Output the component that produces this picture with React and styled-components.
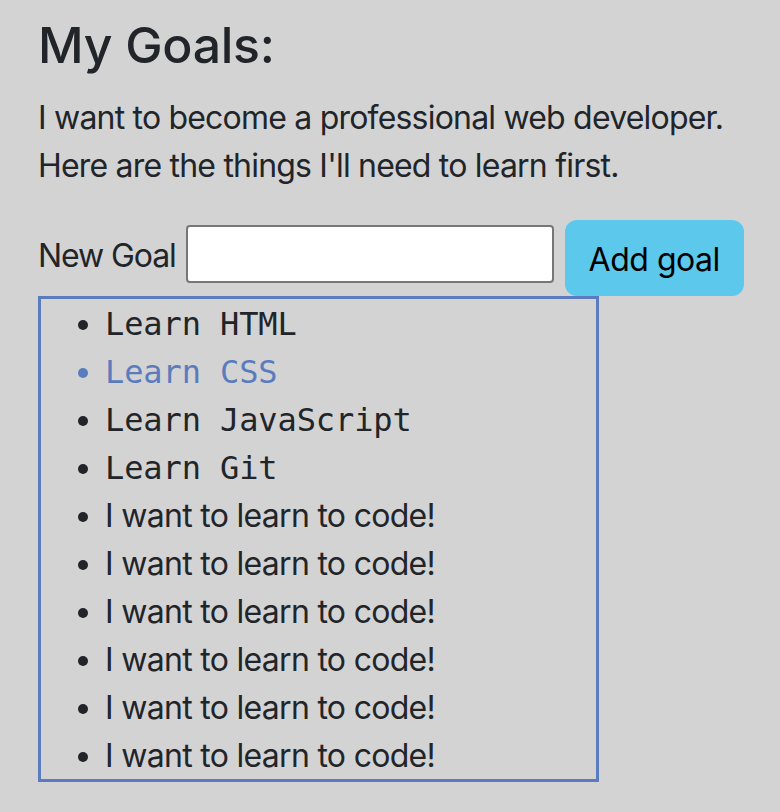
import React from "react";
import styled, { createGlobalStyle } from "styled-components";

const GlobalStyle = createGlobalStyle`
  html, body {
    margin: 0;
    padding: 0;
    background: #d3d3d3;
  }
  body {
    font-family: Inter, "Noto Sans", "Liberation Sans", sans-serif;
    font-size: 32px;
    line-height: 48px;
    color: #212529;
  }
  * { box-sizing: border-box; }
`;

const Page = styled.main`
  padding: 12px 38px 0 38px;
`;

const Title = styled.h1`
  margin: 0 0 15px 0;
  font-size: 50px;
  font-weight: 500;
  line-height: 66.8px;
  letter-spacing: -0.3px;
`;

const Intro = styled.p`
  margin: 0 0 30px 0;
  letter-spacing: -0.8px;
  white-space: nowrap;
`;

const FormRow = styled.form`
  display: flex;
  align-items: flex-start;
  height: 76px;
`;

const Label = styled.label`
  flex-shrink: 0;
  white-space: nowrap;
  margin-top: 12px;
  margin-right: 10px;
  letter-spacing: -1.1px;
`;

const Input = styled.input`
  flex-shrink: 0;
  margin-top: 5px;
  width: 368px;
  height: 58px;
  border: 2px solid #767676;
  border-radius: 4px;
  background: #fff;
  font: inherit;
  padding: 0 8px;
  margin-right: 11px;
`;

const Button = styled.button`
  flex-shrink: 0;
  width: 179px;
  height: 76px;
  border: none;
  border-radius: 12px;
  background: #5bc8ec;
  color: #000;
  font-family: Inter, "Noto Sans", "Liberation Sans", sans-serif;
  font-size: 32px;
  line-height: 48px;
  padding: 4px 0 0 0;
  letter-spacing: -0.5px;
`;

const GoalList = styled.ul`
  margin: 0;
  width: 561px;
  border: 3px solid #5a7bbd;
  padding: 1px 0 0 64px;
  height: 486px;
  list-style: disc;
`;

const Goal = styled.li`
  font-family: ${(p) => (p.$mono ? '"DejaVu Sans Mono", "Liberation Mono", monospace' : 'Inter, "Noto Sans", sans-serif')};
  font-size: 32px;
  line-height: 48px;
  white-space: nowrap;
  color: ${(p) => (p.$highlight ? "#5a7bbd" : "#212529")};
  letter-spacing: ${(p) => (p.$mono ? "-0.1px" : "-0.7px")};
  &::marker {
    font-family: Inter, sans-serif;
  }
`;

const goals = [
  { text: "Learn HTML", mono: true },
  { text: "Learn CSS", mono: true, highlight: true },
  { text: "Learn JavaScript", mono: true },
  { text: "Learn Git", mono: true },
  { text: "I want to learn to code!" },
  { text: "I want to learn to code!" },
  { text: "I want to learn to code!" },
  { text: "I want to learn to code!" },
  { text: "I want to learn to code!" },
  { text: "I want to learn to code!" },
];

export default function App() {
  return (
    <>
      <GlobalStyle />
      <Page>
        <Title>My Goals:</Title>
        <Intro>
          I want to become a professional web developer.
          <br />
          Here are the things I'll need to learn first.
        </Intro>
        <FormRow onSubmit={(e) => e.preventDefault()}>
          <Label htmlFor="goal">New Goal</Label>
          <Input id="goal" type="text" />
          <Button type="submit">Add goal</Button>
        </FormRow>
        <GoalList>
          {goals.map((g, i) => (
            <Goal key={i} $mono={g.mono} $highlight={g.highlight}>
              {g.text}
            </Goal>
          ))}
        </GoalList>
      </Page>
    </>
  );
}
